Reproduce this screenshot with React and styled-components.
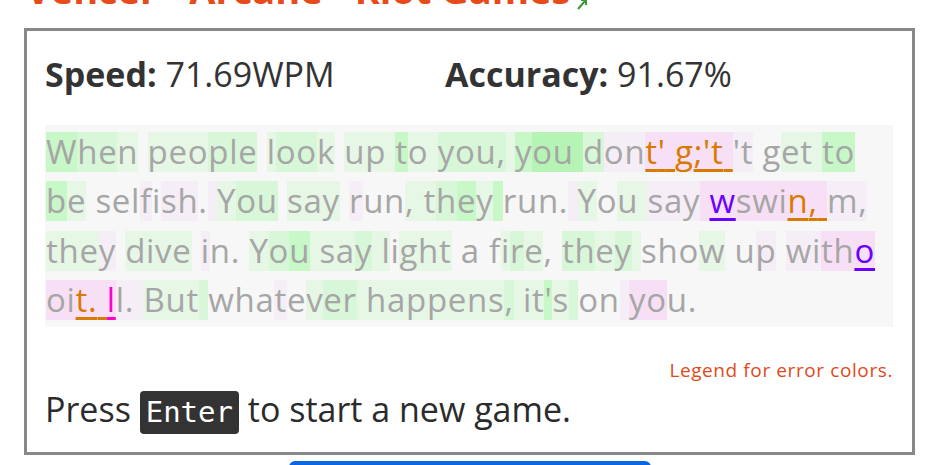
import styled, { createGlobalStyle } from "styled-components";

const GlobalStyle = createGlobalStyle`
  html, body {
    margin: 0;
    padding: 0;
    overflow: hidden;
    background: #ffffff;
    font-family: "Open Sans", "Noto Sans", sans-serif;
  }
`;

const Page = styled.div`
  padding-left: 24px;
`;

const Title = styled.h1`
  margin: -33px 0 0 2px;
  font-size: 38px;
  line-height: 44px;
  font-weight: 700;
  color: #e84b1a;
  white-space: nowrap;
  display: flex;
  align-items: flex-end;
  gap: 6px;
`;

const Card = styled.div`
  box-sizing: border-box;
  width: 891px;
  margin-top: 17px;
  border: 3px solid #888888;
  padding: 23px 19px 18px 18px;
`;

const Stats = styled.div`
  display: grid;
  grid-template-columns: 400px auto;
  font-size: 34px;
  line-height: 41px;
  color: #333333;
`;

const Label = styled.b`
  font-weight: 700;
`;

const Passage = styled.div`
  margin-top: 30px;
  background: #f7f7f7;
  padding: 2px 0;
  font-size: 33px;
  letter-spacing: 0.7px;
  color: #a6a6a6;
`;

const Row = styled.div`
  height: 49.5px;
  display: flex;
  align-items: center;
  padding-left: 1px;
`;

const bgs = {
  "0": "transparent",
  "1": "#e6f7e6",
  "2": "#d8f7d8",
  "3": "#c8f7c8",
  "4": "#b6f4b6",
  a: "#f6eef6",
  b: "#f7e0f5",
};

const errs = {
  o: "#d97a00",
  p: "#6a00ff",
  m: "#ff00c8",
};

const Char = styled.span`
  display: inline-block;
  height: 40px;
  line-height: 40px;
  white-space: pre;
  background: ${(p) => bgs[p.$bg] || "transparent"};
  color: ${(p) => (p.$err ? errs[p.$err] : "inherit")};
  text-decoration: ${(p) => (p.$err ? "underline" : "none")};
  text-decoration-thickness: 3px;
  text-underline-offset: 5px;
`;

const Legend = styled.div`
  margin-top: 30px;
  text-align: right;
  font-size: 19px;
  letter-spacing: 0.6px;
  line-height: 27px;
  color: #e04a1a;
`;

const Prompt = styled.div`
  margin-top: 1px;
  font-size: 34px;
  line-height: 48px;
  color: #2b2b2b;
`;

const Kbd = styled.kbd`
  display: inline-block;
  font-family: "DejaVu Sans Mono", "Liberation Mono", monospace;
  font-size: 29px;
  line-height: 35px;
  padding: 4px 6px;
  background: #333333;
  color: #ffffff;
  border-radius: 4px;
`;

const NewGame = styled.div`
  width: 362px;
  height: 40px;
  margin: 6px 0 0 265px;
  background: #0b66e4;
  border-radius: 6px;
`;

const lines = [
  [
    ["When ", "32210"],
    ["people ", "1112220"],
    ["look ", "12210"],
    ["up ", "111"],
    ["to ", "311"],
    ["you, ", "22221"],
    ["you ", "3444"],
    ["don", "2aa"],
    ["t' g;'t ", "bbbbbbbb", "o"],
    ["'t ", "aa0"],
    ["get ", "0111"],
    ["to", "33"],
  ],
  [
    ["be ", "310"],
    ["selfish. ", "000a0aa0a"],
    ["You ", "1220"],
    ["say ", "1110"],
    ["run, ", "a0011"],
    ["they ", "12313"],
    ["run. ", "0000a"],
    ["You ", "1011"],
    ["say ", "aaab"],
    ["w", "b", "p"],
    ["swi", "bbb"],
    ["n, ", "bbb", "o"],
    ["m,", "aa"],
  ],
  [
    ["they ", "111a0"],
    ["dive ", "11110"],
    ["in. ", "a000"],
    ["You ", "1231"],
    ["say ", "1121"],
    ["light ", "101110"],
    ["a ", "00"],
    ["fire, ", "012100"],
    ["they ", "22121"],
    ["show ", "00010"],
    ["up ", "0a0"],
    ["with", "aabb"],
    ["o", "b", "p"],
  ],
  [
    ["oi", "bb"],
    ["t. ", "bbb", "o"],
    ["l", "b", "m"],
    ["l. ", "aaa"],
    ["But ", "1112"],
    ["whatever ", "000a01221"],
    ["happens, ", "111111121"],
    ["it's ", "11312"],
    ["on ", "00a"],
    ["you.", "bb00"],
  ],
];

function LinkMark() {
  return (
    <svg width="12" height="14" viewBox="0 0 12 14">
      <path d="M2 12 L9 4" stroke="#3a9a3a" strokeWidth="2" fill="none" />
      <path d="M5 3 H10 V8" stroke="#3a9a3a" strokeWidth="2" fill="none" />
    </svg>
  );
}

function App() {
  return (
    <Page>
      <GlobalStyle />
      <Title>
        Vencer - Arcane - Riot Games
        <LinkMark />
      </Title>
      <Card>
        <Stats>
          <span>
            <Label>Speed:</Label> 71.69WPM
          </span>
          <span>
            <Label>Accuracy:</Label> 91.67%
          </span>
        </Stats>
        <Passage>
          {lines.map((segs, i) => (
            <Row key={i}>
              {segs.map(([text, codes, err], j) =>
                text.split("").map((ch, k) => (
                  <Char key={`${j}-${k}`} $bg={codes[k]} $err={err}>
                    {ch}
                  </Char>
                ))
              )}
            </Row>
          ))}
        </Passage>
        <Legend>Legend for error colors.</Legend>
        <Prompt>
          Press <Kbd>Enter</Kbd> to start a new game.
        </Prompt>
      </Card>
      <NewGame />
    </Page>
  );
}

export default App;
